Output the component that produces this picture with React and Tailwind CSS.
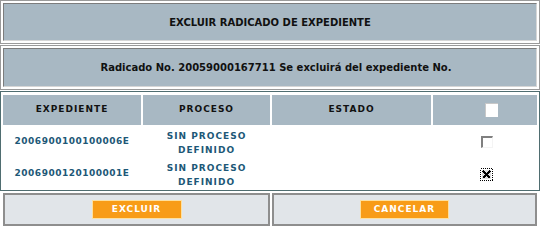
import React from "react";

const font = { fontFamily: '"DejaVu Sans", Verdana, sans-serif' };

const Box = ({ children, className = "", innerClass = "" }) => (
  <div className={`border border-[#9a9a9a] p-[2px] bg-white ${className}`}>
    <div className={`h-full flex items-center justify-center bg-[#a8b8c3] border border-t-[#7c7c7c] border-l-[#7c7c7c] border-b-[#d6d6d6] border-r-[#d6d6d6] text-[10px] font-bold text-[#111] ${innerClass}`}>
      {children}
    </div>
  </div>
);

const CheckedBox = () => (
  <svg width="13" height="13" viewBox="0 0 13 13" shapeRendering="crispEdges">
    <rect x="0" y="0" width="13" height="13" fill="#fff" />
    <rect x="0.5" y="0.5" width="12" height="12" fill="none" stroke="#000" strokeDasharray="1 1" />
    <rect x="2" y="2" width="9" height="9" fill="#ddd" />
    <path d="M3 3 L10 10 M10 3 L3 10" stroke="#000" strokeWidth="2" />
  </svg>
);

const rows = [
  { exp: "2006900100100006E", checked: false },
  { exp: "2006900120100001E", checked: true },
];

export default function App() {
  return (
    <div className="w-[540px] h-[227px] bg-white overflow-hidden" style={font}>
      <Box className="h-[44px] mb-px">EXCLUIR RADICADO DE EXPEDIENTE</Box>
      <Box className="h-[45px] mb-[1px]" innerClass="pl-[12px]">
        Radicado No. 20059000167711 Se excluirá del expediente No.
      </Box>

      {/* tabla de expedientes */}
      <div className="h-[100px] border border-[#4f6d70] px-[2px] pt-[3px]">
        <div className="grid grid-cols-[138px_127px_159px_1fr] gap-x-[2px]">
          <div className="h-[30px] bg-[#a8b8c3] flex items-center justify-center text-[9px] font-bold tracking-[1px] text-[#111]">EXPEDIENTE</div>
          <div className="h-[30px] bg-[#a8b8c3] flex items-center justify-center text-[9px] font-bold tracking-[1px] text-[#111]">PROCESO</div>
          <div className="h-[30px] bg-[#a8b8c3] flex items-center justify-center text-[9px] font-bold tracking-[1px] text-[#111]">ESTADO</div>
          <div className="h-[30px] bg-[#a8b8c3] flex items-center justify-center">
            <div className="w-[13px] h-[14px] ml-[12px] bg-white border-t border-l border-[#c8c8c8]" />
          </div>
        </div>
        <div className="mt-px">
          {rows.map((r) => (
            <div key={r.exp} className="grid grid-cols-[138px_127px_159px_1fr] gap-x-[2px] h-[32px] text-[9px] font-bold tracking-[0.5px] text-[#1d5877]">
              <div className="flex items-center justify-center">{r.exp}</div>
              <div className="flex flex-col items-center justify-center pt-[2px] leading-[14px] tracking-[1px]">
                <span>SIN PROCESO</span>
                <span>DEFINIDO</span>
              </div>
              <div />
              <div className="flex items-center justify-center pl-[3px]">
                {r.checked ? (
                  <CheckedBox />
                ) : (
                  <div className="w-[12px] h-[12px] border-t-2 border-l-2 border-[#808080] border-b border-r border-b-[#f4f4f4] border-r-[#f4f4f4] bg-white" />
                )}
              </div>
            </div>
          ))}
        </div>
      </div>

      {/* botones */}
      <div className="flex gap-[2px] px-[3px] pt-[2px]">
        <div className="w-[267px] h-[33px] bg-[#e1e5e9] border-2 border-[#8e8e8e] flex items-center justify-center">
          <button className="w-[90px] h-[19px] bg-[#f89c17] border border-[#fde0a0] text-white text-[9px] font-bold tracking-[1px]">EXCLUIR</button>
        </div>
        <div className="flex-1 h-[33px] bg-[#e1e5e9] border-2 border-[#8e8e8e] flex items-center justify-center">
          <button className="w-[89px] h-[19px] bg-[#f89c17] border border-[#fde0a0] text-white text-[9px] font-bold tracking-[1px]">CANCELAR</button>
        </div>
      </div>
    </div>
  );
}
